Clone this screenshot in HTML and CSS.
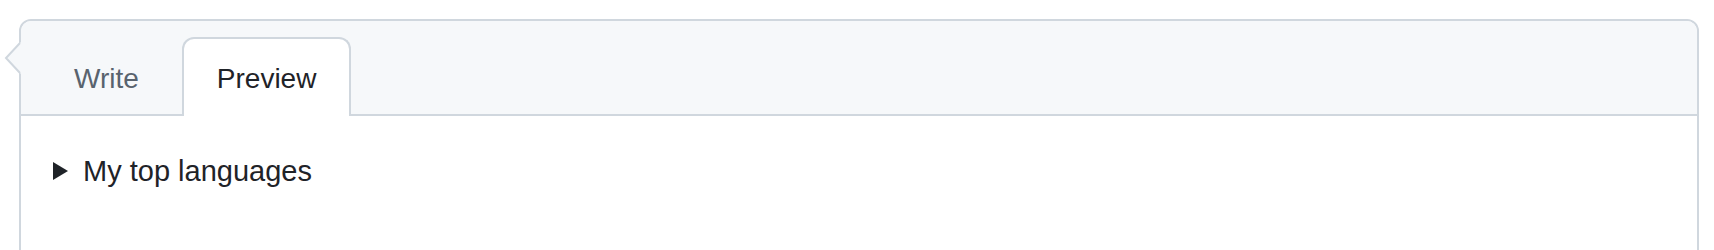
FILE: index.html
```html
<!DOCTYPE html>
<html lang="en">
<head>
<meta charset="utf-8">
<title>Preview</title>
<link rel="stylesheet" href="styles.css">
</head>
<body>
  <div class="comment-box">
    <svg class="caret" width="18" height="36" viewBox="0 0 18 36" aria-hidden="true">
      <polygon points="17,2 2,18 17,34" fill="#f6f8fa"/>
      <polyline points="16,3 2,18 16,33" fill="none" stroke="#d0d7de" stroke-width="2"/>
    </svg>
    <div class="comment-header">
      <button class="tab">Write</button>
      <button class="tab tab-selected">Preview</button>
    </div>
    <div class="comment-body">
      <div class="summary">
        <span class="marker"></span>
        <span class="summary-text">My top languages</span>
      </div>
    </div>
  </div>
</body>
</html>
```
FILE: styles.css
```css
* { box-sizing: border-box; }
html, body { margin: 0; padding: 0; background: #ffffff; }
body {
  font-family: "Liberation Sans", Arial, sans-serif;
  color: #1f2328;
  padding: 19px 0 0 19px;
  overflow: hidden;
  height: 250px;
}
.comment-box {
  position: relative;
  width: 1680px;
  height: 300px;
  border: 2px solid #d0d7de;
  border-radius: 12px 12px 0 0;
  background: #ffffff;
}
.caret {
  position: absolute;
  left: -17px;
  top: 19px;
}
.comment-header {
  display: flex;
  gap: 8px;
  align-items: flex-end;
  padding: 16px 0 0 18px;
  height: 95px;
  background: #f6f8fa;
  border-bottom: 2px solid #d0d7de;
  border-radius: 10px 10px 0 0;
}
.tab {
  font-family: inherit;
  font-size: 28px;
  line-height: 74px;
  height: 79px;
  padding: 3px 33px 0;
  margin-bottom: -2px;
  border: 2px solid transparent;
  border-bottom: 0;
  border-radius: 12px 12px 0 0;
  background: transparent;
  color: #59636e;
  cursor: pointer;
}
.tab-selected {
  background: #ffffff;
  border-color: #d0d7de;
  color: #1f2328;
}
.comment-body {
  padding: 34px 32px;
}
.summary {
  display: flex;
  align-items: center;
  gap: 15px;
  font-size: 29px;
  line-height: 42px;
  height: 42px;
}
.marker {
  width: 0;
  height: 0;
  border-top: 9px solid transparent;
  border-bottom: 9px solid transparent;
  border-left: 15px solid #1f2328;
}
.summary-text {
  letter-spacing: 0;
}
```
